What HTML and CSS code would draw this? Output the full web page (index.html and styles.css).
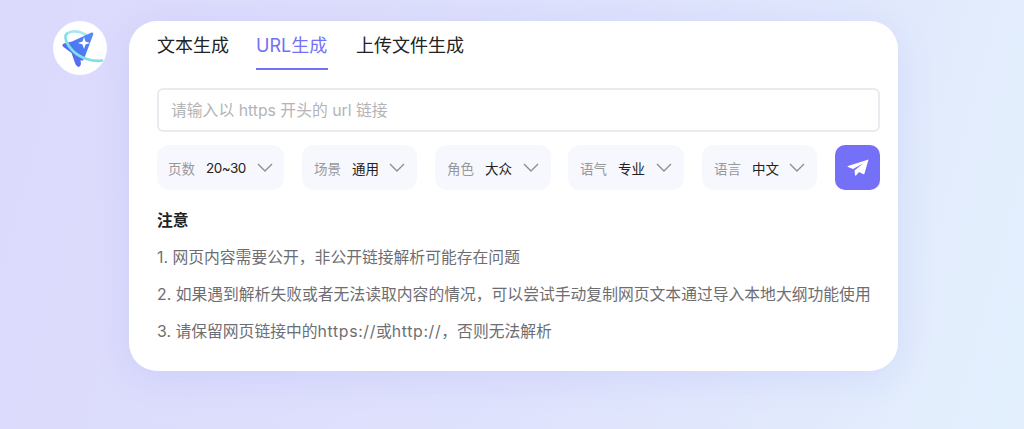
FILE: index.html
```html
<!DOCTYPE html>
<html lang="zh-CN">
<head>
<meta charset="utf-8">
<title>URL生成</title>
<link rel="stylesheet" href="styles.css">
</head>
<body>
<div class="page">
  <div class="logo">
    <svg width="54" height="54" viewBox="0 0 54 54">
      <defs>
        <linearGradient id="g" x1="0" y1="1" x2="1" y2="0">
          <stop offset="0" stop-color="#5f5cf0"/>
          <stop offset=".6" stop-color="#4c7df4"/>
          <stop offset="1" stop-color="#5d8ef7"/>
        </linearGradient>
      </defs>
      <path d="M15 12 C21 9 28 11 33 14" fill="none" stroke="#a8e8ee" stroke-width="2.800" stroke-linecap="round"/>
      <path d="M38.500 11.500 Q41 11 40.200 13.500 L31 38 Q29.500 41 27.500 39 L28 43 Q27 47 24.500 45.500 Q23 45 22 42 L18.500 32 L10.500 26 Q8 24 11 22.500 L19 20.500 Z" fill="url(#g)"/>
      <path d="M14 12.500 C10.500 15.500 13 23 20 30 C27 37 40 41 49 39.500" fill="none" stroke="#7fe0e6" stroke-width="2.600" stroke-linecap="round"/>
      <path d="M31 16 L32.500 20.500 L37 22 L32.500 23.500 L31 28 L29.500 23.500 L25 22 L29.500 20.500 Z" fill="#fff"/>
    </svg>
  </div>
  <main class="card">
    <nav class="tabs">
      <span class="tab tab-first">文本生成</span>
      <span class="tab active">URL生成</span>
      <span class="tab">上传文件生成</span>
    </nav>
    <div class="url-input">请输入以 https 开头的 url 链接</div>
    <div class="options">
      <div class="select s-page"><span class="label">页数</span><span class="value num">20~30</span><svg class="chev" width="16" height="9" viewBox="0 0 16 9"><path d="M1 1l7 7 7-7"/></svg></div>
      <div class="select"><span class="label">场景</span><span class="value">通用</span><svg class="chev" width="16" height="9" viewBox="0 0 16 9"><path d="M1 1l7 7 7-7"/></svg></div>
      <div class="select s-wide"><span class="label">角色</span><span class="value">大众</span><svg class="chev" width="16" height="9" viewBox="0 0 16 9"><path d="M1 1l7 7 7-7"/></svg></div>
      <div class="select s-wide"><span class="label">语气</span><span class="value">专业</span><svg class="chev" width="16" height="9" viewBox="0 0 16 9"><path d="M1 1l7 7 7-7"/></svg></div>
      <div class="select"><span class="label">语言</span><span class="value">中文</span><svg class="chev" width="16" height="9" viewBox="0 0 16 9"><path d="M1 1l7 7 7-7"/></svg></div>
      <button class="send" type="button" aria-label="发送">
        <svg width="22" height="18" viewBox="0 0 22 18"><path d="M21.500 .5 L17.500 14.500 Q17 15.500 16 15 L12 13 L9 16.500 Q8 17 8 16 L7.500 11.500 L16 4.500 L6 10 L1 8 Q0 7.500 1 7 Z" fill="#fff"/></svg>
      </button>
    </div>
    <h2 class="note-title">注意</h2>
    <p class="note">1. 网页内容需要公开，非公开链接解析可能存在问题</p>
    <p class="note">2. 如果遇到解析失败或者无法读取内容的情况，可以尝试手动复制网页文本通过导入本地大纲功能使用</p>
    <p class="note">3. 请保留网页链接中的<span class="latin">https://</span>或<span class="latin">http://</span>，否则无法解析</p>
  </main>
</div>
</body>
</html>
```
FILE: styles.css
```css
* { box-sizing: border-box; }
html, body { margin: 0; height: 100%; }
body {
  font-family: Inter, "Noto Sans CJK SC", sans-serif;
  background: linear-gradient(105deg, #dbd9fc 0%, #dfe2fc 55%, #e3f0fd 100%);
  overflow: hidden;
}
.page {
  display: flex;
  align-items: flex-start;
  gap: 22px;
  padding: 21px 0 0 53px;
}
.logo {
  width: 54px;
  height: 54px;
  flex: none;
  border-radius: 50%;
  background: #fff;
  display: flex;
}
.card {
  width: 769px;
  height: 350px;
  background: #fff;
  border-radius: 28px;
  padding: 0 18px 0 28px;
  box-shadow: 0 6px 36px rgba(110, 120, 235, .14);
}
.tabs {
  display: flex;
  gap: 28px;
  height: 49px;
  font-size: 18px;
  color: #222;
}
.tab {
  height: 49px;
  padding-top: 13px;
  line-height: 24px;
}
.tab-first { margin-right: -1px; }
.tab.active {
  width: 72px;
  white-space: nowrap;
  color: #7470f8;
  border-bottom: 2px solid #7470f8;
}
.url-input {
  margin-top: 18px;
  height: 44px;
  border: 2px solid #eaeaf0;
  border-radius: 6px;
  padding: 1px 12px 0;
  line-height: 40px;
  font-size: 15.800px;
  color: #b4b4b8;
}
.options {
  display: flex;
  gap: 18px;
  margin-top: 13px;
}
.select {
  width: 115px;
  height: 45px;
  flex: none;
  display: flex;
  align-items: center;
  background: #f7f8fe;
  border-radius: 12px;
  padding: 0 12px;
  font-size: 13.500px;
}
.s-page { width: 127px; padding: 0 11px; }
.s-wide { width: 116px; }
.s-wide + .s-wide { margin-left: -1px; }
.label { color: #98989c; }
.value { color: #222; margin-left: 11px; }
.num { letter-spacing: -.5px; }
.chev {
  margin-left: auto;
  fill: none;
  stroke: #8e8e94;
  stroke-width: 1.400;
}
.send {
  width: 45px;
  height: 45px;
  flex: none;
  border: 0;
  padding: 0;
  border-radius: 10px;
  background: #7470f8;
  display: flex;
  align-items: center;
  justify-content: center;
}
.note-title {
  margin: 21px 0 0;
  font-size: 15.800px;
  line-height: 20px;
  font-weight: 700;
  color: #222;
}
.note {
  margin: 17px 0 0;
  font-size: 15.800px;
  line-height: 20px;
  color: #6e6e72;
}
.latin { letter-spacing: .65px; }
```
